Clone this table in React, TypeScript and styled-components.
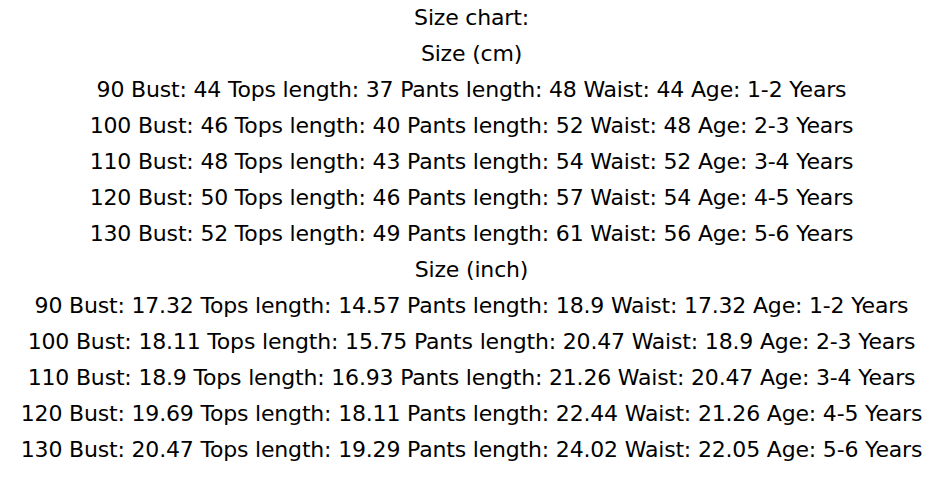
import React from 'react';
import styled, { createGlobalStyle } from 'styled-components';

const GlobalStyle = createGlobalStyle`
    html, body {
        margin: 0;
        padding: 0;
        background: #ffffff;
    }
`;

const Chart = styled.div`
    width: 943px;
    height: 487px;
    overflow: hidden;
    box-sizing: border-box;
    display: flex;
    flex-direction: column;
    align-items: center;
    font-family: "DejaVu Sans", sans-serif;
    font-size: 22px;
    letter-spacing: -0.18px;
    color: #000000;
`;

const Line = styled.div`
    height: 36px;
    line-height: 36px;
    white-space: nowrap;
    text-align: center;
`;

const cm = [
    '90 Bust: 44 Tops length: 37 Pants length: 48 Waist: 44 Age: 1-2 Years',
    '100 Bust: 46 Tops length: 40 Pants length: 52 Waist: 48 Age: 2-3 Years',
    '110 Bust: 48 Tops length: 43 Pants length: 54 Waist: 52 Age: 3-4 Years',
    '120 Bust: 50 Tops length: 46 Pants length: 57 Waist: 54 Age: 4-5 Years',
    '130 Bust: 52 Tops length: 49 Pants length: 61 Waist: 56 Age: 5-6 Years',
];

const inch = [
    '90 Bust: 17.32 Tops length: 14.57 Pants length: 18.9 Waist: 17.32 Age: 1-2 Years',
    '100 Bust: 18.11 Tops length: 15.75 Pants length: 20.47 Waist: 18.9 Age: 2-3 Years',
    '110 Bust: 18.9 Tops length: 16.93 Pants length: 21.26 Waist: 20.47 Age: 3-4 Years',
    '120 Bust: 19.69 Tops length: 18.11 Pants length: 22.44 Waist: 21.26 Age: 4-5 Years',
    '130 Bust: 20.47 Tops length: 19.29 Pants length: 24.02 Waist: 22.05 Age: 5-6 Years',
];

const App = () => {
    return (
        <>
            <GlobalStyle />
            <Chart>
                <Line>Size chart:</Line>
                <Line>Size (cm)</Line>
                {cm.map((l) => (
                    <Line key={l}>{l}</Line>
                ))}
                <Line>Size (inch)</Line>
                {inch.map((l) => (
                    <Line key={l}>{l}</Line>
                ))}
            </Chart>
        </>
    );
};

export default App;
